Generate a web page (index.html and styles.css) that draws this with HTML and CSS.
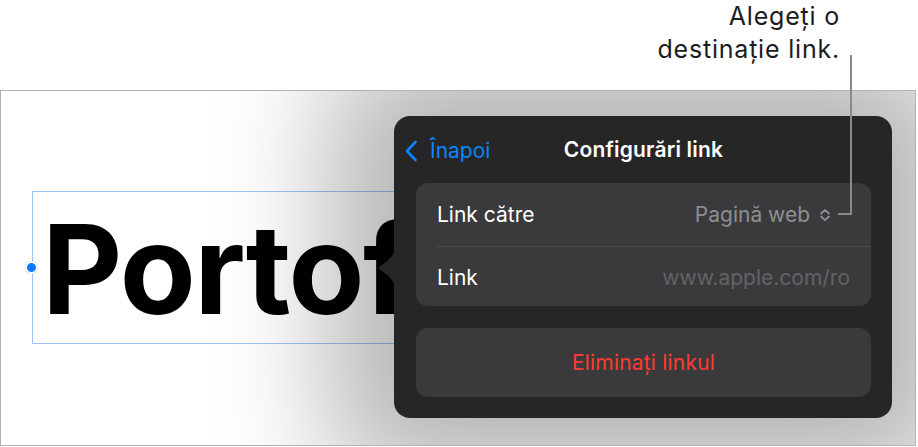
FILE: index.html
```html
<!DOCTYPE html>
<html lang="ro">
<head>
<meta charset="utf-8">
<link rel="stylesheet" href="styles.css">
</head>
<body>
<div class="page">
  <div class="callout">
    <p class="callout-text">Alegeți o<br>destinație link.</p>
  </div>
  <div class="frame">
    <div class="textwrap">
      <span class="handle"></span>
      <div class="textbox">
        <span class="big">Portofoliu</span>
      </div>
    </div>
    <div class="popover">
      <svg class="arrow" width="17" height="46" viewBox="0 0 17 46"><path d="M17 0 C17 9 13 13 8 17 C4 20 1 21 1 23 C1 25 4 26 8 29 C13 33 17 37 17 46 Z" fill="#262626"/></svg>
      <div class="header">
        <div class="back">
          <svg width="14" height="22" viewBox="0 0 14 22"><path d="M11.5 2 L3 11 L11.5 20" fill="none" stroke="#0a84ff" stroke-width="2.6" stroke-linecap="round" stroke-linejoin="round"/></svg>
          <span>Înapoi</span>
        </div>
        <div class="title">Configurări link</div>
      </div>
      <div class="group">
        <div class="row row-first">
          <span class="label">Link către</span>
          <span class="value"><span>Pagină web</span><svg class="updown" width="14" height="14" viewBox="0 0 14 14"><path d="M3 5.5 L7 1.8 L11 5.5 M3 8.5 L7 12.2 L11 8.5" fill="none" stroke="#8e8e93" stroke-width="1.8" stroke-linecap="round" stroke-linejoin="round"/></svg></span>
        </div>
        <div class="sep"></div>
        <div class="row row-second">
          <span class="label">Link</span>
          <span class="value dim">www.apple.com/ro</span>
        </div>
      </div>
      <div class="group action">
        <span class="remove">Eliminați linkul</span>
      </div>
    </div>
  </div>
  <div class="leader-v"></div>
  <div class="leader-h"></div>
</div>
</body>
</html>
```

FILE: styles.css
```css
html, body {
  margin: 0;
  padding: 0;
  background: #ffffff;
}
body {
  width: 918px;
  height: 447px;
  overflow: hidden;
  font-family: Inter, "Noto Sans", sans-serif;
}
.page {
  position: relative;
  width: 918px;
  height: 447px;
}
.callout {
  height: 90px;
  display: flex;
  justify-content: flex-end;
  padding-right: 78px;
  box-sizing: border-box;
}
.callout-text {
  margin: 0;
  padding-top: 0;
  text-align: right;
  font-size: 25px;
  line-height: 33px;
  color: #1c1c1e;
  letter-spacing: 0.8px;
}
.frame {
  position: relative;
  width: 916px;
  height: 356px;
  box-sizing: border-box;
  border: 1px solid #b2b2b2;
  overflow: hidden;
  background: #ffffff;
}
.textwrap {
  position: relative;
  margin-top: 100px;
  margin-left: 31px;
  width: 364px;
}
.textbox {
  height: 153px;
  box-sizing: border-box;
  border: 1px solid #9ec4f6;
  border-right: none;
  padding-top: 15px;
  padding-left: 9px;
  overflow: hidden;
}
.big {
  font-size: 124px;
  line-height: 124px;
  font-weight: 700;
  color: #000;
  letter-spacing: -1.5px;
  white-space: nowrap;
}
.handle {
  position: absolute;
  left: -7px;
  top: 70px;
  width: 9px;
  height: 9px;
  border-radius: 50%;
  background: #0a7aff;
  border: 2px solid #fff;
  box-shadow: 0 0 1px rgba(0,0,0,0.4);
}
.popover {
  position: absolute;
  left: 393px;
  top: 25px;
  width: 498px;
  height: 302px;
  box-sizing: border-box;
  background: #262626;
  border-radius: 16px;
  padding: 0 21px 21px 22px;
  box-shadow: 0 0 115px 65px rgba(0,0,0,0.29);
  display: flex;
  flex-direction: column;
}
.arrow {
  position: absolute;
  left: -16px;
  top: 129px;
}
.header {
  position: relative;
  height: 67px;
  display: flex;
  align-items: center;
  justify-content: center;
}
.back {
  position: absolute;
  left: -12px;
  top: 22px;
  display: flex;
  align-items: center;
  gap: 12px;
  color: #0a84ff;
  font-size: 21px;
}
.back svg { display: block; }
.title {
  color: #ffffff;
  font-size: 21px;
  font-weight: 600;
  letter-spacing: 0.2px;
}
.group {
  background: #3a3a3c;
  border-radius: 12px;
}
.row {
  display: flex;
  align-items: center;
  justify-content: space-between;
  padding: 0 21px;
  font-size: 21px;
}
.row-first { height: 63px; padding-right: 39px; }
.row-second { height: 59px; padding-top: 2px; box-sizing: border-box; }
.label { color: #ffffff; }
.value {
  color: #8e8e93;
  display: flex;
  align-items: center;
  gap: 8px;
}
.value.dim { color: #636366; }
.updown { display: block; }
.sep {
  height: 1px;
  margin-left: 20px;
  background: #4b4b4e;
}
.action {
  margin-top: 22px;
  height: 69px;
  display: flex;
  align-items: center;
  justify-content: center;
}
.remove {
  color: #ff3b30;
  font-size: 21px;
  letter-spacing: 0.2px;
}
.leader-v {
  position: absolute;
  left: 850px;
  top: 55px;
  width: 2px;
  height: 160px;
  background: #8a8a8a;
}
.leader-h {
  position: absolute;
  left: 838px;
  top: 213px;
  width: 14px;
  height: 2px;
  background: #8a8a8a;
}
```
